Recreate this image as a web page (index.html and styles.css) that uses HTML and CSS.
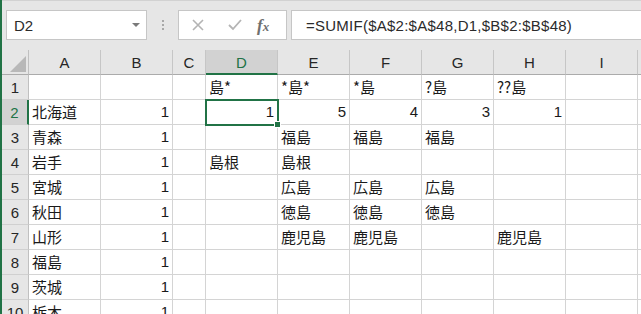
FILE: index.html
```html
<!DOCTYPE html>
<html lang="ja">
<head>
  <meta charset="UTF-8" />
  <meta name="viewport" content="width=device-width, initial-scale=1" />
  <title>SUMIF - Book1</title>
  <link rel="stylesheet" href="styles.css">
</head>
<body>
  <div class="app">

    <!-- name box + formula bar -->
    <div class="toolbar">
      <div class="namebox">
        <span>D2</span>
        <span class="caret"></span>
      </div>
      <div class="grip"><i></i><i></i><i></i></div>
      <div class="fxbtns">
        <svg class="ico" width="14" height="14" viewBox="0 0 14 14"><path d="M2 2 L12 12 M12 2 L2 12" stroke="#b4b4b4" stroke-width="1.6" fill="none"/></svg>
        <svg class="ico" width="16" height="14" viewBox="0 0 16 14"><path d="M2 7 L6 11 L14 2" stroke="#b4b4b4" stroke-width="1.8" fill="none"/></svg>
        <span class="fx">f<sub>x</sub></span>
      </div>
      <div class="formula">=SUMIF($A$2:$A$48,D1,$B$2:$B$48)</div>
    </div>

    <!-- sheet -->
    <div class="sheet">
      <div class="hd corner"><span class="tri"></span></div>
      <div class="hd">A</div>
      <div class="hd">B</div>
      <div class="hd">C</div>
      <div class="hd sel">D</div>
      <div class="hd">E</div>
      <div class="hd">F</div>
      <div class="hd">G</div>
      <div class="hd">H</div>
      <div class="hd">I</div>
      <div class="hd"></div>

      <div class="rh">1</div>
      <div class="c"></div><div class="c"></div><div class="c"></div>
      <div class="c">島*</div><div class="c">*島*</div><div class="c">*島</div>
      <div class="c">?島</div><div class="c">??島</div><div class="c"></div><div class="c"></div>

      <div class="rh sel">2</div>
      <div class="c">北海道</div><div class="c n">1</div><div class="c"></div>
      <div class="c n active">1<span class="handle"></span></div>
      <div class="c n">5</div><div class="c n">4</div><div class="c n">3</div><div class="c n">1</div>
      <div class="c"></div><div class="c"></div>

      <div class="rh">3</div>
      <div class="c">青森</div><div class="c n">1</div><div class="c"></div>
      <div class="c"></div><div class="c">福島</div><div class="c">福島</div><div class="c">福島</div>
      <div class="c"></div><div class="c"></div><div class="c"></div>

      <div class="rh">4</div>
      <div class="c">岩手</div><div class="c n">1</div><div class="c"></div>
      <div class="c">島根</div><div class="c">島根</div><div class="c"></div><div class="c"></div>
      <div class="c"></div><div class="c"></div><div class="c"></div>

      <div class="rh">5</div>
      <div class="c">宮城</div><div class="c n">1</div><div class="c"></div>
      <div class="c"></div><div class="c">広島</div><div class="c">広島</div><div class="c">広島</div>
      <div class="c"></div><div class="c"></div><div class="c"></div>

      <div class="rh">6</div>
      <div class="c">秋田</div><div class="c n">1</div><div class="c"></div>
      <div class="c"></div><div class="c">徳島</div><div class="c">徳島</div><div class="c">徳島</div>
      <div class="c"></div><div class="c"></div><div class="c"></div>

      <div class="rh">7</div>
      <div class="c">山形</div><div class="c n">1</div><div class="c"></div>
      <div class="c"></div><div class="c">鹿児島</div><div class="c">鹿児島</div><div class="c"></div>
      <div class="c">鹿児島</div><div class="c"></div><div class="c"></div>

      <div class="rh">8</div>
      <div class="c">福島</div><div class="c n">1</div><div class="c"></div>
      <div class="c"></div><div class="c"></div><div class="c"></div><div class="c"></div>
      <div class="c"></div><div class="c"></div><div class="c"></div>

      <div class="rh">9</div>
      <div class="c">茨城</div><div class="c n">1</div><div class="c"></div>
      <div class="c"></div><div class="c"></div><div class="c"></div><div class="c"></div>
      <div class="c"></div><div class="c"></div><div class="c"></div>

      <div class="rh">10</div>
      <div class="c">栃木</div><div class="c n">1</div><div class="c"></div>
      <div class="c"></div><div class="c"></div><div class="c"></div><div class="c"></div>
      <div class="c"></div><div class="c"></div><div class="c"></div>
    </div>

  </div>
</body>
</html>
```

FILE: styles.css
```css
:root{
  --green:#217346;
  --bar:#e6e6e6;
  --grid:#d4d4d4;
  --hdline:#c6c6c6;
}
*{box-sizing:border-box;margin:0;padding:0}
html,body{width:641px;height:314px;overflow:hidden;background:#fff}
body{font-family:"Noto Sans CJK JP","Noto Sans",sans-serif;color:#1f1f1f}

.app{
  border-left:2px solid var(--green);
  height:314px;
}

/* ---------- formula bar ---------- */
.toolbar{
  height:50px;
  background:var(--bar);
  border-top:1px solid #d2d2d2;
  display:flex;
  align-items:flex-start;
  padding:9px 0 0 4px;
}
.namebox{
  width:141px;
  height:30px;
  background:#fff;
  border:1px solid #c6c6c6;
  display:flex;
  align-items:center;
  justify-content:space-between;
  padding:0 6px 0 7px;
  font-family:"Liberation Sans",Arial,sans-serif;
  font-size:15px;
  color:#2b2b2b;
}
.caret{
  width:0;height:0;
  border-left:4px solid transparent;
  border-right:4px solid transparent;
  border-top:4px solid #7a7a7a;
}
.grip{
  width:31px;
  height:30px;
  display:flex;
  flex-direction:column;
  align-items:center;
  justify-content:center;
  gap:2px;
}
.grip i{display:block;width:2px;height:2px;background:#a8a8a8}
.fxbtns{
  width:109px;
  height:30px;
  background:#fff;
  border:1px solid #c6c6c6;
  display:flex;
  align-items:center;
  padding:0 0 0 12px;
}
.fxbtns .ico:first-child{margin-right:22px}
.fxbtns .ico:nth-child(2){margin-right:14px}
.fx{
  font-family:"Liberation Serif","Times New Roman",serif;
  font-style:italic;
  font-weight:bold;
  font-size:17px;
  color:#707070;
  line-height:1;
}
.fx sub{font-size:13px;vertical-align:0;position:relative;top:0}
.formula{
  flex:1;
  height:30px;
  margin-left:4px;
  margin-right:-10px;
  background:#fff;
  border:1px solid #c6c6c6;
  display:flex;
  align-items:center;
  padding-left:14px;
  font-family:"Liberation Sans",Arial,sans-serif;
  font-size:15px;
  letter-spacing:.25px;
  color:#2b2b2b;
}

/* ---------- sheet grid ---------- */
.sheet{
  display:grid;
  grid-template-columns:27px 72px 72px 33px 72px 72px 72px 72px 72px 72px 1fr;
  grid-auto-rows:25px;
  font-size:15px;
}
.hd{
  background:var(--bar);
  border-right:1px solid var(--hdline);
  border-bottom:1px solid #ababab;
  display:flex;
  align-items:center;
  justify-content:center;
  font-family:"Liberation Sans",Arial,sans-serif;
  color:#262626;
  padding-top:1px;
}
.hd.sel{
  background:#d2d2d2;
  color:var(--green);
  border-bottom:2px solid var(--green);
  padding-top:2px;
}
.corner{
  position:relative;
  border-right:1px solid #c0c0c0;
}
.tri{
  position:absolute;
  right:2px;bottom:2px;
  width:0;height:0;
  border-left:16px solid transparent;
  border-bottom:16px solid #b8b8b8;
}
.rh{
  background:var(--bar);
  border-right:1px solid #c0c0c0;
  border-bottom:1px solid #d0d0d0;
  display:flex;
  align-items:center;
  justify-content:center;
  font-family:"Liberation Sans",Arial,sans-serif;
  color:#262626;
}
.rh.sel{
  background:#d2d2d2;
  color:var(--green);
  border-right:2px solid var(--green);
}
.c{
  border-right:1px solid var(--grid);
  border-bottom:1px solid var(--grid);
  padding:0 3px;
  line-height:24px;
  white-space:nowrap;
  overflow:visible;
  color:#1a1a1a;
}
.c.n{
  text-align:right;
  font-family:"Liberation Sans",Arial,sans-serif;
}
.active{
  position:relative;
  outline:2px solid var(--green);
  outline-offset:-1px;
  z-index:1;
}
.handle{
  position:absolute;
  right:-4px;bottom:-4px;
  width:7px;height:7px;
  background:var(--green);
  border:1px solid #fff;
}
```
